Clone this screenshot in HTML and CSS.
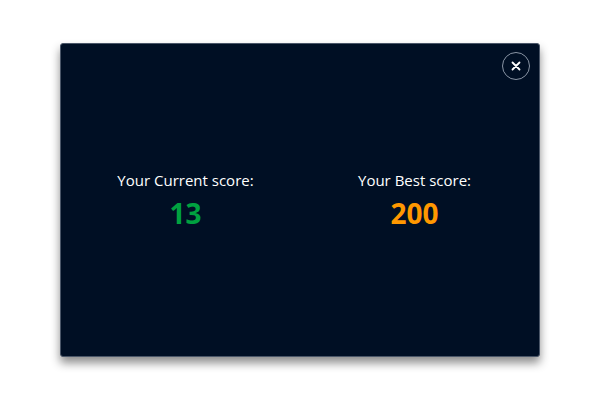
FILE: index.html
```html
<!DOCTYPE html>
<html>
<head>
<meta charset="utf-8">
<link rel="stylesheet" href="styles.css">
</head>
<body>
<div class="modal">
  <button class="close" aria-label="Close">
    <svg width="10" height="10" viewBox="0 0 10 10"><path d="M1.5 1.5 L8.5 8.5 M8.5 1.5 L1.5 8.5" stroke="#fff" stroke-width="1.8" stroke-linecap="round"/></svg>
  </button>
  <div class="scores">
    <div class="score">
      <div class="label">Your Current score:</div>
      <div class="value current">13</div>
    </div>
    <div class="score">
      <div class="label">Your Best score:</div>
      <div class="value best">200</div>
    </div>
  </div>
</div>
</body>
</html>
```
FILE: styles.css
```css
html, body { margin: 0; background: #fff; }
body {
  width: 600px; height: 400px;
  padding: 43px 60px;
  box-sizing: border-box;
  font-family: "Open Sans", "Noto Sans", sans-serif;
}
.modal {
  position: relative;
  height: 314px;
  background: #000f24;
  border: 1px solid #4a5668;
  border-radius: 3px;
  box-sizing: border-box;
  box-shadow: 0 6px 10px rgba(0,0,0,0.45);
  display: flex;
  align-items: center;
  padding: 0 10px;
}
.close {
  position: absolute;
  top: 8px; right: 9px;
  width: 28px; height: 28px;
  border-radius: 50%;
  border: 1px solid #8a95a5;
  background: transparent;
  padding: 0;
  display: flex; align-items: center; justify-content: center;
  cursor: pointer;
}
.scores { display: flex; width: 100%; margin-top: 1px; }
.score { flex: 1; text-align: center; }
.label { color: #fff; font-size: 15px; line-height: 20px; }
.value { font-size: 28px; font-weight: 700; line-height: 36px; margin-top: 5px; }
.current { color: #00a140; }
.best { color: #ff9800; }
```
